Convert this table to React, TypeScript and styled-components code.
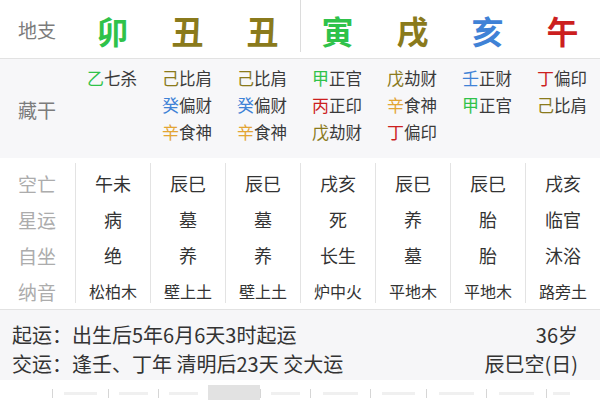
import React from "react";
import styled, { createGlobalStyle } from "styled-components";

const Global = createGlobalStyle`
  html, body { margin: 0; padding: 0; background: #ffffff; }
  body { font-family: "Noto Sans CJK SC", "Noto Sans", sans-serif; }
`;

const C = {
  wood: "#2fc24a",
  earth: "#8a7a1c",
  water: "#3f82d6",
  fire: "#cc1f1f",
  metal: "#e3a534",
};

const Page = styled.div`
  width: 600px;
  height: 400px;
  overflow: hidden;
  background: #fff;
  color: #333;
`;

const BranchRow = styled.div`
  display: grid;
  grid-template-columns: repeat(8, 75px);
  height: 58px;
  border-bottom: 1px solid #e2e2e2;
  align-items: center;
`;

const RowLabel = styled.div<{ $light?: boolean }>`
  font-size: 19px;
  color: ${(p) => (p.$light ? "#a8a8a8" : "#7c7c7c")};
  padding-left: 18px;
  line-height: 1;
`;

const BigChar = styled.div<{ $color: string; $split?: boolean }>`
  height: 100%;
  display: flex;
  align-items: center;
  justify-content: center;
  font-size: 32px;
  font-weight: 700;
  color: ${(p) => p.$color};
  padding-top: 2px;
  box-sizing: border-box;
  position: relative;
  ${(p) =>
    p.$split &&
    `&::before { content: ""; position: absolute; left: 0; top: 0; height: 52px; width: 1px; background: #dcdcdc; }`}
`;

const HiddenRow = styled.div`
  display: grid;
  grid-template-columns: repeat(8, 75px);
  background: #f7f7f9;
  padding: 5px 0 13px;
  align-items: start;
`;

const HiddenLabel = styled(RowLabel)`
  align-self: center;
  padding-top: 10px;
`;

const HiddenCell = styled.div`
  display: flex;
  flex-direction: column;
  padding-left: 12px;
`;

const Item = styled.div`
  font-size: 16.5px;
  line-height: 27px;
  height: 27px;
  color: #3a3a3a;
  white-space: nowrap;
`;

const Stem = styled.span<{ $color: string }>`
  color: ${(p) => p.$color};
  font-size: 17px;
`;

const InfoTable = styled.div`
  display: grid;
  grid-template-columns: repeat(8, 75px);
  padding-top: 5px;
  padding-bottom: 6px;
  border-bottom: 1px solid #e2e2e2;
`;

const InfoCol = styled.div<{ $lined?: boolean }>`
  display: flex;
  flex-direction: column;
  align-items: center;
  padding-top: 2px;
  height: 140px;
  overflow: hidden;
  box-sizing: border-box;
  border-left: ${(p) => (p.$lined ? "1px solid #e3e3e3" : "none")};
`;

const LabelCol = styled.div`
  display: flex;
  flex-direction: column;
  padding-top: 2px;
  height: 140px;
  overflow: hidden;
  box-sizing: border-box;
`;

const Cell = styled.div<{ $small?: boolean }>`
  height: 36px;
  flex: none;
  display: flex;
  align-items: center;
  justify-content: center;
  font-size: ${(p) => (p.$small ? "16px" : "18px")};
  color: #333;
  white-space: nowrap;
`;

const LabelCell = styled.div`
  height: 36px;
  flex: none;
  display: flex;
  align-items: center;
  padding-left: 18px;
  font-size: 19px;
  color: #acacac;
`;

const Footer = styled.div`
  background: #f6f6f8;
  padding: 10px 22px 2px 12px;
`;

const FooterLine = styled.div`
  display: flex;
  justify-content: space-between;
  font-size: 20px;
  line-height: 29px;
  color: #333;
  white-space: nowrap;
`;

const TabStrip = styled.div`
  display: flex;
  align-items: flex-end;
  height: 20px;
  padding-left: 52px;
  background: #fff;
`;

const Tab = styled.div<{ $w: number; $active?: boolean }>`
  width: ${(p) => p.$w}px;
  height: ${(p) => (p.$active ? "15px" : "9px")};
  margin-bottom: ${(p) => (p.$active ? "0" : "2px")};
  border-left: ${(p) => (p.$active ? "none" : "1px solid #d6d6d6")};
  background: ${(p) => (p.$active ? "#e2e2e2" : "transparent")};
  box-sizing: border-box;
  display: flex;
  align-items: center;
  justify-content: center;
`;

const TabGhost = styled.div`
  width: 60%;
  height: 3px;
  background: #f0f0f0;
`;

type Hidden = { s: string; c: string; g: string };

const branches: { ch: string; color: string }[] = [
  { ch: "卯", color: C.wood },
  { ch: "丑", color: C.earth },
  { ch: "丑", color: C.earth },
  { ch: "寅", color: C.wood },
  { ch: "戌", color: C.earth },
  { ch: "亥", color: C.water },
  { ch: "午", color: C.fire },
];

const hidden: Hidden[][] = [
  [{ s: "乙", c: C.wood, g: "七杀" }],
  [
    { s: "己", c: C.earth, g: "比肩" },
    { s: "癸", c: C.water, g: "偏财" },
    { s: "辛", c: C.metal, g: "食神" },
  ],
  [
    { s: "己", c: C.earth, g: "比肩" },
    { s: "癸", c: C.water, g: "偏财" },
    { s: "辛", c: C.metal, g: "食神" },
  ],
  [
    { s: "甲", c: C.wood, g: "正官" },
    { s: "丙", c: C.fire, g: "正印" },
    { s: "戊", c: C.earth, g: "劫财" },
  ],
  [
    { s: "戊", c: C.earth, g: "劫财" },
    { s: "辛", c: C.metal, g: "食神" },
    { s: "丁", c: C.fire, g: "偏印" },
  ],
  [
    { s: "壬", c: C.water, g: "正财" },
    { s: "甲", c: C.wood, g: "正官" },
  ],
  [
    { s: "丁", c: C.fire, g: "偏印" },
    { s: "己", c: C.earth, g: "比肩" },
  ],
];

const info: string[][] = [
  ["午未", "病", "绝", "松柏木"],
  ["辰巳", "墓", "养", "壁上土"],
  ["辰巳", "墓", "养", "壁上土"],
  ["戌亥", "死", "长生", "炉中火"],
  ["辰巳", "养", "墓", "平地木"],
  ["辰巳", "胎", "胎", "平地木"],
  ["戌亥", "临官", "沐浴", "路旁土"],
];

export default function App() {
  return (
    <Page>
      <Global />
      <BranchRow>
        <RowLabel>地支</RowLabel>
        {branches.map((b, i) => (
          <BigChar key={i} $color={b.color} $split={i === 3}>
            {b.ch}
          </BigChar>
        ))}
      </BranchRow>
      <HiddenRow>
        <HiddenLabel>藏干</HiddenLabel>
        {hidden.map((col, i) => (
          <HiddenCell key={i}>
            {col.map((h, j) => (
              <Item key={j}>
                <Stem $color={h.c}>{h.s}</Stem>
                {h.g}
              </Item>
            ))}
          </HiddenCell>
        ))}
      </HiddenRow>
      <InfoTable>
        <LabelCol>
          {["空亡", "星运", "自坐", "纳音"].map((l) => (
            <LabelCell key={l}>{l}</LabelCell>
          ))}
        </LabelCol>
        {info.map((col, i) => (
          <InfoCol key={i} $lined>
            {col.map((v, j) => (
              <Cell key={j} $small={j === 3}>
                {v}
              </Cell>
            ))}
          </InfoCol>
        ))}
      </InfoTable>
      <Footer>
        <FooterLine>
          <span>起运：出生后5年6月6天3时起运</span>
          <span>36岁</span>
        </FooterLine>
        <FooterLine>
          <span>交运：逢壬、丁年 清明后23天 交大运</span>
          <span>辰巳空(日)</span>
        </FooterLine>
      </Footer>
      <TabStrip>
        <Tab $w={56}><TabGhost /></Tab>
        <Tab $w={50}><TabGhost /></Tab>
        <Tab $w={50}><TabGhost /></Tab>
        <Tab $w={52} $active />
        <Tab $w={50}><TabGhost /></Tab>
        <Tab $w={60}><TabGhost /></Tab>
        <Tab $w={56}><TabGhost /></Tab>
        <Tab $w={60}><TabGhost /></Tab>
        <Tab $w={60}><TabGhost /></Tab>
        <Tab $w={30}><TabGhost /></Tab>
      </TabStrip>
    </Page>
  );
}
